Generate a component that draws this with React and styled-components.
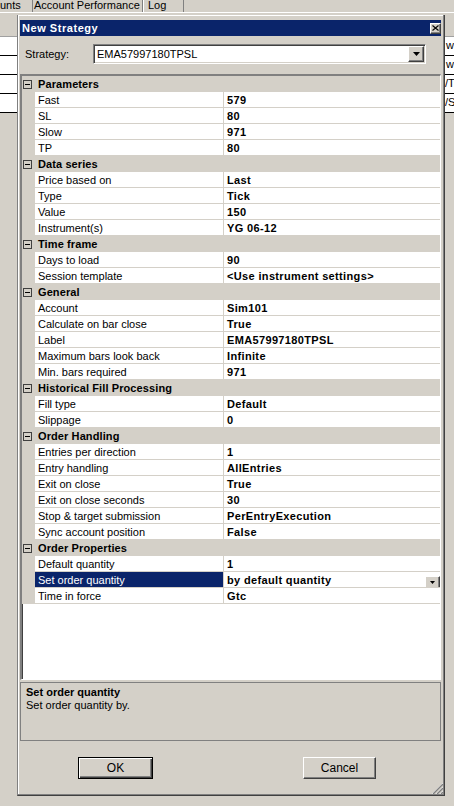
import React from 'react';
import styled, { createGlobalStyle } from 'styled-components';

const Global = createGlobalStyle`
  html, body { margin: 0; padding: 0; background: #d4d0c8; }
  body { font-family: "Liberation Sans", Arial, sans-serif; font-size: 11px; color: #000; }
  * { box-sizing: border-box; }
`;

const Page = styled.div`
  width: 454px;
  height: 806px;
  overflow: hidden;
  background: #d4d0c8;
  display: flex;
  flex-direction: column;
`;

const TabStrip = styled.div`
  display: flex;
  height: 13px;
  flex-shrink: 0;
  border-bottom: 1px solid #fff;
`;

const Tab = styled.div`
  width: ${p => p.$w}px;
  height: 12px;
  padding-left: ${p => p.$pl}px;
  line-height: 11px;
  white-space: nowrap;
  border-right: 1px solid #808080;
  ${p => p.$lite && 'border-left: 1px solid #fff;'}
`;

const Workspace = styled.div`
  display: flex;
  align-items: flex-start;
  flex-shrink: 0;
`;

const SidePanel = styled.div`
  width: ${p => p.$w}px;
  flex: ${p => (p.$grow ? 1 : '0 0 auto')};
  overflow: hidden;
  padding-top: 23px;
`;

const SideList = styled.div`
  background: #fff;
  border-top: 1px solid #a0a0a0;
`;

const SideRow = styled.div`
  height: 19px;
  border-bottom: 1px solid #000;
  line-height: 17px;
  white-space: nowrap;
  overflow: hidden;
  padding-left: ${p => p.$pl || 0}px;
`;

const Dialog = styled.div`
  width: 428px;
  height: 781px;
  margin-top: 2px;
  flex-shrink: 0;
  display: flex;
  flex-direction: column;
  background: #d4d0c8;
  border-left: 1px solid #808080;
  border-right: 1px solid #404040;
  border-bottom: 1px solid #404040;
  box-shadow: inset -1px -1px 0 #808080, inset 1px 1px 0 #fff;
  padding: 5px 3px 1px 2px;
`;

const TitleBar = styled.div`
  height: 16px;
  background: #0a246a;
  display: flex;
  align-items: center;
  justify-content: space-between;
  padding: 0 0 0 2px;
`;

const TitleText = styled.span`
  color: #fff;
  font-weight: bold;
  letter-spacing: 0.55px;
  line-height: 16px;
`;

const RaisedBtn = styled.div`
  background: #d4d0c8;
  border: 1px solid;
  border-color: #fff #404040 #404040 #fff;
  box-shadow: inset -1px -1px 0 #808080;
  display: flex;
  align-items: center;
  justify-content: center;
`;

const CloseBtn = styled(RaisedBtn)`
  width: 11px;
  height: 11px;
`;

const StrategyRow = styled.div`
  margin-top: 8px;
  height: 20px;
  display: flex;
  align-items: center;
`;

const FieldLabel = styled.div`
  width: 73px;
  padding-left: 5px;
`;

const Combo = styled.div`
  width: 333px;
  height: 20px;
  display: flex;
  align-items: stretch;
  background: #fff;
  border: 1px solid;
  border-color: #808080 #fff #fff #808080;
  box-shadow: inset 1px 1px 0 #404040, inset -1px -1px 0 #d4d0c8;
  padding: 1px;
`;

const ComboText = styled.div`
  flex: 1;
  padding-left: 2px;
  line-height: 16px;
`;

const ComboBtn = styled(RaisedBtn)`
  width: 16px;
  height: 16px;
`;

const Grid = styled.div`
  margin-top: 10px;
  height: 606px;
  display: flex;
  flex-direction: column;
  border-style: solid;
  border-width: 2px 1px 1px 2px;
  border-color: #808080 #fff #fff #808080;
  box-shadow: inset 1px 1px 0 #404040;
  background: #fff;
  overflow: hidden;
`;

const CategoryRow = styled.div`
  height: 16px;
  display: flex;
  align-items: center;
  background: #d4d0c8;
  flex-shrink: 0;
`;

const Expander = styled.div`
  width: 9px;
  height: 9px;
  margin-left: 1px;
  border: 1px solid #404040;
  display: flex;
  align-items: center;
  justify-content: center;
  &::after {
    content: '';
    width: 5px;
    height: 1px;
    background: #000;
  }
`;

const CategoryText = styled.span`
  margin-left: 6px;
  font-weight: bold;
  line-height: 16px;
  letter-spacing: 0.1px;
`;

const PropRow = styled.div`
  height: 16px;
  display: grid;
  grid-template-columns: 13px 189px 216px;
  flex-shrink: 0;
`;

const Gutter = styled.div`
  background: #d4d0c8;
`;

const NameCell = styled.div`
  background: ${p => (p.$sel ? '#0a246a' : '#fff')};
  color: ${p => (p.$sel ? '#fff' : '#000')};
  border-right: 1px solid #d4d0c8;
  border-bottom: 1px solid #d4d0c8;
  padding: 1px 0 0 3px;
  line-height: 14px;
  white-space: nowrap;
  overflow: hidden;
`;

const ValueCell = styled.div`
  display: flex;
  align-items: flex-start;
  border-bottom: 1px solid #d4d0c8;
  padding: 1px 0 0 3px;
  font-weight: bold;
  letter-spacing: 0.35px;
  line-height: 14px;
  white-space: nowrap;
  overflow: hidden;
`;

const ValueText = styled.span`
  flex: 1;
`;

const CellBtn = styled(RaisedBtn)`
  width: 15px;
  height: 13px;
  margin-top: 3px;
`;

const GridFiller = styled.div`
  flex: 1;
`;

const HelpPanel = styled.div`
  margin-top: 2px;
  height: 59px;
  border: 1px solid #808080;
  padding: 3px 5px;
  line-height: 13px;
`;

const HelpTitle = styled.div`
  font-weight: bold;
`;

const ButtonRow = styled.div`
  margin-top: 16px;
  display: flex;
  justify-content: space-between;
  padding: 0 65px 0 58px;
`;

const Button = styled.div`
  width: ${p => p.$w}px;
  height: 22px;
  display: flex;
  align-items: center;
  justify-content: center;
  background: #d4d0c8;
  border: 1px solid;
  border-color: ${p => (p.$default ? '#000' : '#fff #404040 #404040 #fff')};
  box-shadow: ${p =>
    p.$default
      ? 'inset 1px 1px 0 #fff, inset -1px -1px 0 #404040, inset -2px -2px 0 #808080'
      : 'inset -1px -1px 0 #808080'};
  font-size: 12px;
`;

const GripRow = styled.div`
  margin-top: auto;
  display: flex;
  justify-content: flex-end;
  margin-right: -2px;
`;

const Arrow = ({ w = 7 }) => (
  <svg width={w} height={Math.ceil(w / 2)} viewBox={`0 0 ${w} ${Math.ceil(w / 2)}`}>
    <polygon points={`0,0 ${w},0 ${w / 2},${Math.ceil(w / 2)}`} fill="#000" />
  </svg>
);

const CloseGlyph = () => (
  <svg width="7" height="6" viewBox="0 0 7 6">
    <path d="M0.5 0.5 L6.5 5.5 M6.5 0.5 L0.5 5.5" stroke="#000" strokeWidth="1.1" />
  </svg>
);

const Grip = () => (
  <svg width="12" height="12" viewBox="0 0 12 12">
    {[0, 4, 8].map(o => (
      <g key={o}>
        <line x1={12} y1={o + 1} x2={o + 1} y2={12} stroke="#fff" strokeWidth="1" />
        <line x1={12} y1={o + 2} x2={o + 2} y2={12} stroke="#808080" strokeWidth="1.4" />
      </g>
    ))}
  </svg>
);

const data = [
  ['Parameters', [['Fast', '579'], ['SL', '80'], ['Slow', '971'], ['TP', '80']]],
  ['Data series', [['Price based on', 'Last'], ['Type', 'Tick'], ['Value', '150'], ['Instrument(s)', 'YG 06-12']]],
  ['Time frame', [['Days to load', '90'], ['Session template', '<Use instrument settings>']]],
  ['General', [
    ['Account', 'Sim101'],
    ['Calculate on bar close', 'True'],
    ['Label', 'EMA57997180TPSL'],
    ['Maximum bars look back', 'Infinite'],
    ['Min. bars required', '971'],
  ]],
  ['Historical Fill Processing', [['Fill type', 'Default'], ['Slippage', '0']]],
  ['Order Handling', [
    ['Entries per direction', '1'],
    ['Entry handling', 'AllEntries'],
    ['Exit on close', 'True'],
    ['Exit on close seconds', '30'],
    ['Stop & target submission', 'PerEntryExecution'],
    ['Sync account position', 'False'],
  ]],
  ['Order Properties', [
    ['Default quantity', '1'],
    ['Set order quantity', 'by default quantity', true],
    ['Time in force', 'Gtc'],
  ]],
];

export default function App() {
  return (
    <Page>
      <Global />
      <TabStrip>
        <Tab $w={33} $pl={0}>unts</Tab>
        <Tab $w={110} $pl={1}>Account Performance</Tab>
        <Tab $w={41} $pl={4} $lite>Log</Tab>
      </TabStrip>
      <Workspace>
        <SidePanel $w={17}>
          <SideList>
            <SideRow />
            <SideRow />
            <SideRow />
            <SideRow />
          </SideList>
        </SidePanel>
        <Dialog>
          <TitleBar>
            <TitleText>New Strategy</TitleText>
            <CloseBtn><CloseGlyph /></CloseBtn>
          </TitleBar>
          <StrategyRow>
            <FieldLabel>Strategy:</FieldLabel>
            <Combo>
              <ComboText>EMA57997180TPSL</ComboText>
              <ComboBtn><Arrow w={7} /></ComboBtn>
            </Combo>
          </StrategyRow>
          <Grid>
            {data.map(([cat, rows]) => (
              <React.Fragment key={cat}>
                <CategoryRow>
                  <Expander />
                  <CategoryText>{cat}</CategoryText>
                </CategoryRow>
                {rows.map(([name, value, sel]) => (
                  <PropRow key={name}>
                    <Gutter />
                    <NameCell $sel={sel}>{name}</NameCell>
                    <ValueCell>
                      <ValueText>{value}</ValueText>
                      {sel && <CellBtn><Arrow w={5} /></CellBtn>}
                    </ValueCell>
                  </PropRow>
                ))}
              </React.Fragment>
            ))}
            <GridFiller />
          </Grid>
          <HelpPanel>
            <HelpTitle>Set order quantity</HelpTitle>
            <div>Set order quantity by.</div>
          </HelpPanel>
          <ButtonRow>
            <Button $w={75} $default>OK</Button>
            <Button $w={73}>Cancel</Button>
          </ButtonRow>
          <GripRow><Grip /></GripRow>
        </Dialog>
        <SidePanel $grow>
          <SideList>
            <SideRow $pl={1}>w</SideRow>
            <SideRow $pl={1}>w</SideRow>
            <SideRow>/T</SideRow>
            <SideRow>/S</SideRow>
          </SideList>
        </SidePanel>
      </Workspace>
    </Page>
  );
}
